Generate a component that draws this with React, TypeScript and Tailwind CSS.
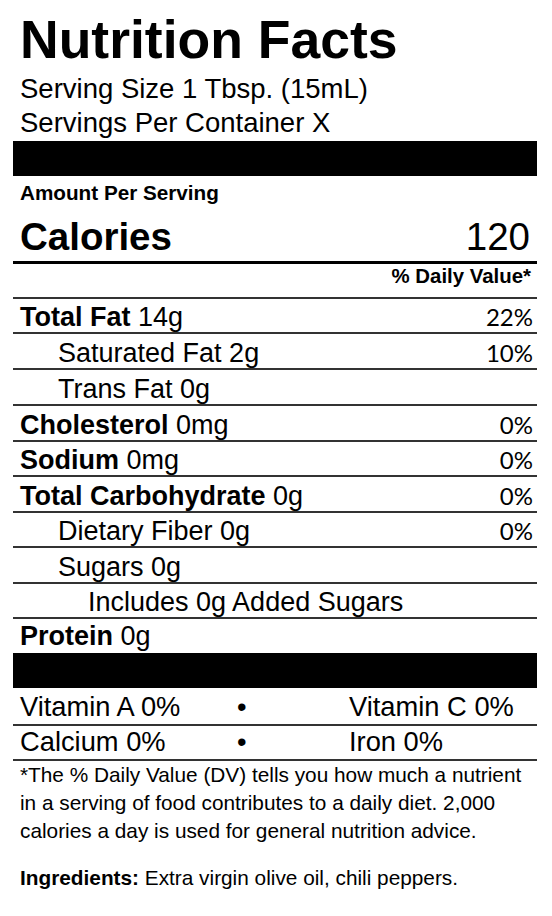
import React from "react";

type Row = {
  label: string;
  bold?: boolean;
  value?: string;
  pct?: string;
  indent?: string;
  h: string;
};

const rows: Row[] = [
  { label: "Total Fat", bold: true, value: "14g", pct: "22%", indent: "pl-[7px]", h: "h-[35px]" },
  { label: "Saturated Fat", value: "2g", pct: "10%", indent: "pl-[45px]", h: "h-[36px]" },
  { label: "Trans Fat", value: "0g", indent: "pl-[45px]", h: "h-[36px]" },
  { label: "Cholesterol", bold: true, value: "0mg", pct: "0%", indent: "pl-[7px]", h: "h-[36px]" },
  { label: "Sodium", bold: true, value: "0mg", pct: "0%", indent: "pl-[7px]", h: "h-[35px]" },
  { label: "Total Carbohydrate", bold: true, value: "0g", pct: "0%", indent: "pl-[7px]", h: "h-[36px]" },
  { label: "Dietary Fiber", value: "0g", pct: "0%", indent: "pl-[45px]", h: "h-[35px]" },
  { label: "Sugars", value: "0g", indent: "pl-[45px]", h: "h-[36px]" },
  { label: "Includes 0g Added Sugars", indent: "pl-[75px]", h: "h-[35px]" },
];

const arial = "font-['Liberation_Sans',Arial,sans-serif]";

export default function App() {
  return (
    <div className={`min-h-[916px] w-[552px] bg-white text-black ${arial}`}>
      <div className="ml-[13px] w-[524px]">
        <div className="mt-[10px] pl-[7px] text-[53.5px] font-bold leading-[60px] whitespace-nowrap">
          Nutrition Facts
        </div>
        <div className="mt-[2px] pl-[7px] text-[27.5px] leading-[34px] whitespace-nowrap">
          <div>Serving Size 1 Tbsp. (15mL)</div>
          <div>Servings Per Container X</div>
        </div>
        <div className="mt-[1px] h-[35px] bg-black" />
        <div className="mt-[5px] pl-[7px] text-[20.7px] font-bold leading-[24px]">
          Amount Per Serving
        </div>
        <div className="mt-[10px] flex items-baseline justify-between border-b-[3px] border-black pb-[2px] pl-[7px] pr-[7px] text-[38.5px] leading-[44px]">
          <span className="font-bold">Calories</span>
          <span>120</span>
        </div>
        <div className="flex h-[35px] items-start justify-end border-b-2 border-[#333] pr-[6px] text-[20.4px] font-bold leading-[24px]">
          % Daily Value*
        </div>
        {rows.map((r) => (
          <div
            key={r.label}
            className={`flex items-end border-b-2 border-[#333] pb-[1px] pr-[4px] ${r.h} ${r.indent}`}
          >
            <div className="flex w-full items-baseline justify-between">
              <span className="text-[27px] leading-[28px] whitespace-nowrap">
                {r.bold ? <span className="font-bold">{r.label}</span> : r.label}
                {r.value ? ` ${r.value}` : ""}
              </span>
              {r.pct ? (
                <span className="font-['Lato',sans-serif] text-[24px] leading-[28px]">{r.pct}</span>
              ) : null}
            </div>
          </div>
        ))}
        <div className="flex h-[34px] items-end pb-[3px] pl-[7px]">
          <span className="text-[27px] leading-[28px]">
            <span className="font-bold">Protein</span> 0g
          </span>
        </div>
        <div className="h-[35px] bg-black" />
        <div className="flex h-[38px] items-end border-b-2 border-[#333] pb-[3px] pl-[7px] text-[27.3px] leading-[28px]">
          <span className="w-[217px] whitespace-nowrap">Vitamin A 0%</span>
          <span className="w-[112px]">•</span>
          <span className="whitespace-nowrap">Vitamin C 0%</span>
        </div>
        <div className="flex h-[35px] items-end border-b-2 border-[#333] pb-[3px] pl-[7px] text-[27.3px] leading-[28px]">
          <span className="w-[217px] whitespace-nowrap">Calcium 0%</span>
          <span className="w-[112px]">•</span>
          <span className="whitespace-nowrap">Iron 0%</span>
        </div>
        <div className="pl-[7px] text-[20.8px] leading-[28px] whitespace-nowrap">
          *The % Daily Value (DV) tells you how much a nutrient
          <br />
          in a serving of food contributes to a daily diet. 2,000
          <br />
          calories a day is used for general nutrition advice.
        </div>
        <div className="mt-[19px] pl-[7px] text-[20.8px] leading-[28px] whitespace-nowrap">
          <span className="font-bold">Ingredients:</span> Extra virgin olive oil, chili peppers.
        </div>
      </div>
    </div>
  );
}
